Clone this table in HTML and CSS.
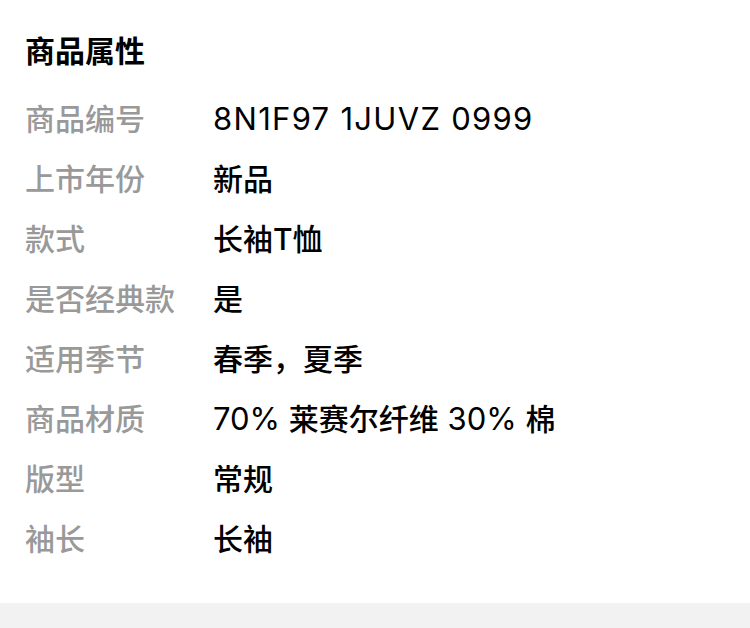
FILE: index.html
```html
<!DOCTYPE html>
<html lang="zh-CN">
<head>
<meta charset="utf-8">
<link rel="stylesheet" href="styles.css">
</head>
<body>
<section class="attrs">
  <h2 class="title">商品属性</h2>
  <div class="list">
    <div class="row"><span class="label">商品编号</span><span class="value"><span class="en code">8N1F97 1JUVZ 0999</span></span></div>
    <div class="row"><span class="label">上市年份</span><span class="value">新品</span></div>
    <div class="row"><span class="label">款式</span><span class="value">长袖<span class="en-b">T</span>恤</span></div>
    <div class="row"><span class="label">是否经典款</span><span class="value">是</span></div>
    <div class="row"><span class="label">适用季节</span><span class="value">春季，夏季</span></div>
    <div class="row"><span class="label">商品材质</span><span class="value"><span class="en">70% </span>莱赛尔纤维<span class="en"> 30% </span>棉</span></div>
    <div class="row"><span class="label">版型</span><span class="value">常规</span></div>
    <div class="row"><span class="label">袖长</span><span class="value">长袖</span></div>
  </div>
</section>
<div class="band"></div>
</body>
</html>
```
FILE: styles.css
```css
html, body {
  margin: 0;
  padding: 0;
  background: #fff;
}
body {
  font-family: "Noto Sans CJK SC", sans-serif;
  width: 750px;
}
.attrs {
  padding: 19px 25px 36px;
}
.title {
  margin: 0 0 8px;
  font-size: 30px;
  line-height: 60px;
  font-weight: 700;
  color: #000;
}
.row {
  display: flex;
  height: 60px;
  align-items: center;
  font-size: 30px;
}
.label {
  width: 188px;
  flex: none;
  color: #999;
  font-weight: 500;
}
.value {
  color: #000;
  font-weight: 500;
}
.en {
  font-family: "Inter", "Noto Sans", sans-serif;
  font-size: 31px;
  font-weight: 400;
}
.code {
  letter-spacing: 1.3px;
}
.en-b {
  font-family: "Inter", "Noto Sans", sans-serif;
  font-weight: 500;
}
.band {
  height: 25px;
  background: #f2f2f2;
}
```
